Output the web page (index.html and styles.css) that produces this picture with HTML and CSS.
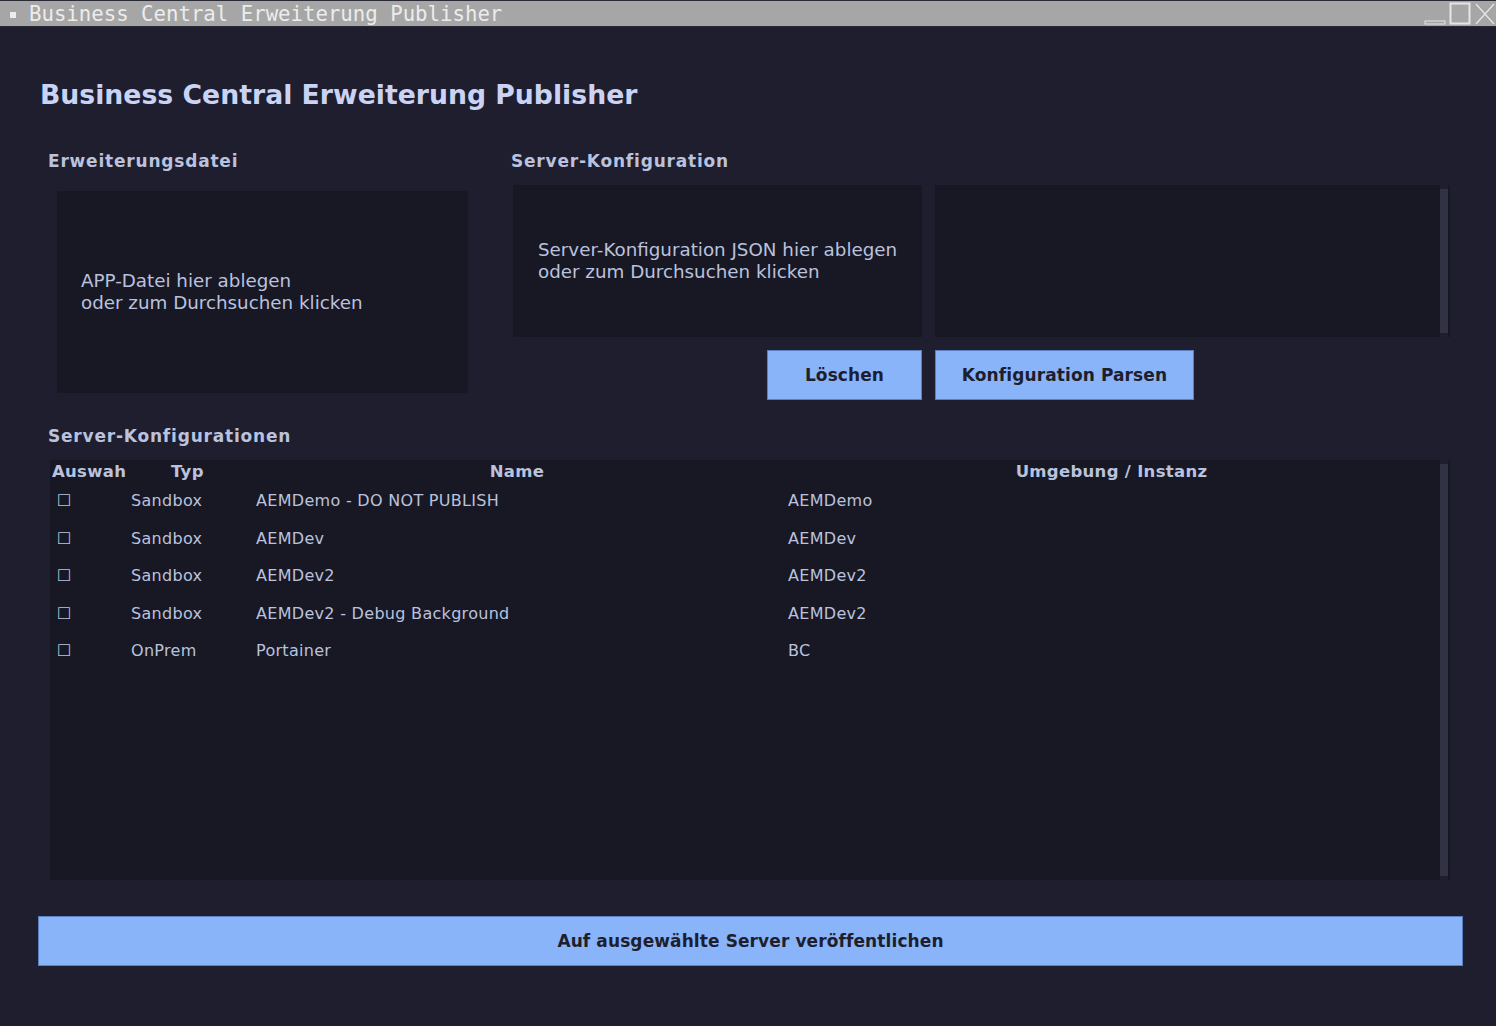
FILE: index.html
```html
<!DOCTYPE html>
<html lang="de">
<head>
<meta charset="utf-8">
<title>Business Central Erweiterung Publisher</title>
<link rel="stylesheet" href="styles.css">
</head>
<body>
<div class="titlebar">
  <div class="tb-left"><span class="tb-dot"></span><span class="tb-title">Business Central Erweiterung Publisher</span></div>
  <div class="tb-controls">
    <svg class="tb-min" width="22" height="24" viewBox="0 0 22 24"><rect x="1" y="20" width="20" height="3" fill="none" stroke="#e6e6e6" stroke-width="1"/></svg>
    <svg class="tb-max" width="22" height="24" viewBox="0 0 22 24"><rect x="1.5" y="2.5" width="19" height="20" fill="none" stroke="#e6e6e6" stroke-width="2"/></svg>
    <svg class="tb-close" width="22" height="24" viewBox="0 0 22 24"><path d="M2 3 L20 23 M20 3 L2 23" stroke="#e6e6e6" stroke-width="1.3"/></svg>
  </div>
</div>
<main class="app">
  <h1 class="heading">Business Central Erweiterung Publisher</h1>
  <div class="top">
    <section class="file-col">
      <h2 class="label">Erweiterungsdatei</h2>
      <div class="drop drop-app">APP-Datei hier ablegen<br>oder zum Durchsuchen klicken</div>
    </section>
    <section class="cfg-col">
      <h2 class="label">Server-Konfiguration</h2>
      <div class="cfg-grid">
        <div class="drop drop-json">Server-Konfiguration JSON hier ablegen<br>oder zum Durchsuchen klicken</div>
        <div class="textarea"><div class="scrollbar"></div></div>
        <div class="btn-cell right"><button class="btn btn-clear">Löschen</button></div>
        <div class="btn-cell"><button class="btn btn-parse">Konfiguration Parsen</button></div>
      </div>
    </section>
  </div>
  <h2 class="label label-list">Server-Konfigurationen</h2>
  <div class="table-wrap">
    <div class="table">
      <div class="row head">
        <div class="c c1">Auswah</div>
        <div class="c c2">Typ</div>
        <div class="c c3">Name</div>
        <div class="c c4">Umgebung / Instanz</div>
      </div>
      <div class="row"><div class="c c1">☐</div><div class="c c2">Sandbox</div><div class="c c3">AEMDemo - DO NOT PUBLISH</div><div class="c c4">AEMDemo</div></div>
      <div class="row"><div class="c c1">☐</div><div class="c c2">Sandbox</div><div class="c c3">AEMDev</div><div class="c c4">AEMDev</div></div>
      <div class="row"><div class="c c1">☐</div><div class="c c2">Sandbox</div><div class="c c3">AEMDev2</div><div class="c c4">AEMDev2</div></div>
      <div class="row"><div class="c c1">☐</div><div class="c c2">Sandbox</div><div class="c c3">AEMDev2 - Debug Background</div><div class="c c4">AEMDev2</div></div>
      <div class="row"><div class="c c1">☐</div><div class="c c2">OnPrem</div><div class="c c3">Portainer</div><div class="c c4">BC</div></div>
    </div>
    <div class="scrollbar"></div>
  </div>
  <button class="btn btn-publish">Auf ausgewählte Server veröffentlichen</button>
</main>
</body>
</html>
```

FILE: styles.css
```css
* { box-sizing: border-box; }
html, body { margin: 0; padding: 0; }
body {
  background: #1e1e2e;
  color: #cdd6f4;
  font-family: "DejaVu Sans", "Noto Sans", sans-serif;
  width: 1496px;
  height: 1026px;
  overflow: hidden;
}
.titlebar {
  height: 27px;
  background: #a6a6a6;
  border-top: 1px solid #2a2a36;
  border-bottom: 1px solid #2a2a36;
  display: flex;
  justify-content: space-between;
  align-items: center;
}
.tb-left { display: flex; align-items: center; padding-top: 2px; }
.tb-dot { width: 6px; height: 6px; background: #ececec; margin: 0 13px 0 10px; }
.tb-title {
  font-family: "DejaVu Sans Mono", monospace;
  font-size: 20.7px;
  color: #ececec;
  line-height: 25px;
}
.tb-controls { display: flex; align-items: flex-start; gap: 3px; height: 25px; }
.tb-controls svg { display: block; }

.heading {
  margin: 0;
  padding: 53px 0 0 40px;
  font-size: 26.7px;
  font-weight: bold;
  color: #cbd3f5;
  line-height: 30px;
}
.label {
  margin: 0;
  font-size: 17px;
  letter-spacing: 0.8px;
  font-weight: bold;
  color: #bac2de;
  line-height: 19px;
}
.top { display: flex; padding: 42px 0 0 48px; }
.file-col { width: 463px; }
.file-col .drop { margin: 20px 0 0 9px; width: 411px; height: 202px; }
.drop {
  background: #181825;
  color: #bac2de;
  font-size: 18.3px;
  line-height: 22.5px;
  display: flex;
  align-items: center;
  padding-left: 24px;
}
.cfg-col { width: 940px; }
.cfg-grid {
  margin: 14px 0 0 2px;
  display: grid;
  grid-template-columns: 409px 515px;
  grid-template-rows: 152px 50px;
  column-gap: 13px;
  row-gap: 13px;
}
.drop-json { padding-left: 25px; }
.textarea { background: #181825; position: relative; }
.scrollbar {
  position: absolute;
  right: 2px;
  top: 0;
  bottom: 0;
  width: 8px;
  background: #313244;
  border-top: 4px solid #1e1e2e;
  border-bottom: 4px solid #1e1e2e;
}
.btn-cell { display: flex; }
.btn-cell.right { justify-content: flex-end; }
.btn {
  background: #89b4fa;
  border: 1px solid #5c7fbf;
  color: #1e1e2e;
  font-family: "DejaVu Sans", sans-serif;
  font-weight: bold;
  font-size: 17px;
  letter-spacing: 0.1px;
  padding: 0;
  height: 50px;
}
.btn-clear { width: 155px; }
.btn-parse { width: 259px; }

.label-list { padding: 27px 0 0 48px; }
.table-wrap {
  margin: 14px 0 0 50px;
  width: 1400px;
  height: 420px;
  background: #181825;
  position: relative;
}
.table { width: 1390px; }
.row { display: flex; height: 37.5px; align-items: center; font-size: 16px; letter-spacing: 0.3px; color: #bac2de; }
.row.head { height: 23px; font-weight: bold; font-size: 16.5px; letter-spacing: 0.3px; color: #bac2de; margin-bottom: -1px; }
.c { padding-left: 6px; white-space: nowrap; overflow: hidden; }
.c1 { width: 76px; padding-left: 7px; }
.c2 { width: 125px; padding-left: 5px; }
.c3 { width: 532px; padding-left: 5px; }
.c4 { flex: 1; padding-left: 5px; }
.head .c1 { padding-left: 2px; }
.head .c2 { padding-left: 45px; }
.head .c3 { text-align: center; padding-left: 0; }
.head .c4 { text-align: center; padding-left: 0; }

.btn-publish {
  display: block;
  margin: 36px 0 0 38px;
  width: 1425px;
  height: 50px;
}
```
